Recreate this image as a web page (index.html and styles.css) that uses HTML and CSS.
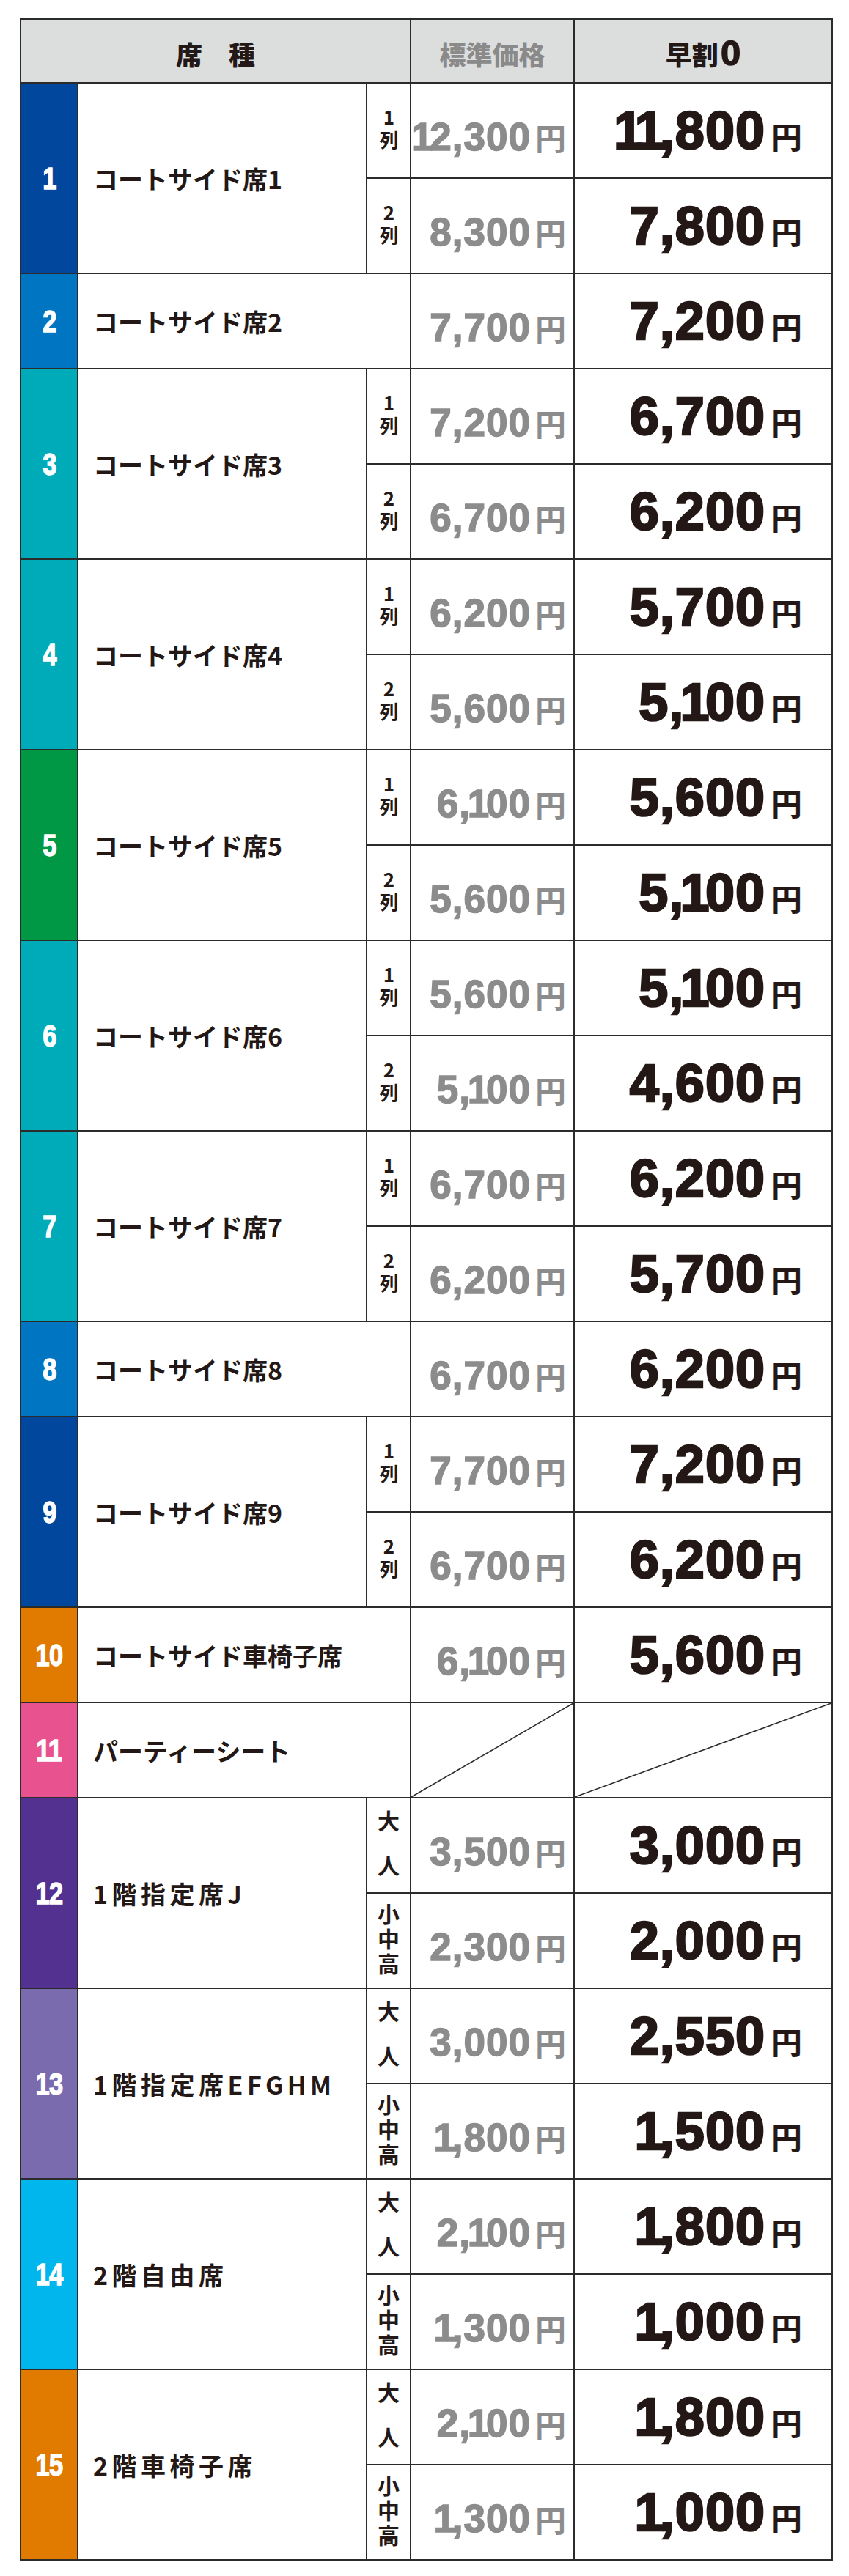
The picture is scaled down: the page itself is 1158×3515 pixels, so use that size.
FILE: index.html
```html
<!DOCTYPE html>
<html lang="ja">
<head>
<meta charset="utf-8">
<title>席種・料金表</title>
<link rel="stylesheet" href="styles.css">
</head>
<body>
<table class="price-table">
  <colgroup>
    <col class="col-num"><col class="col-name"><col class="col-sub"><col class="col-std"><col class="col-early">
  </colgroup>
  <thead>
    <tr>
      <th colspan="3" class="h-seat">席　種</th>
      <th class="h-std">標準価格</th>
      <th class="h-early">早割<span class="h-zero">0</span></th>
    </tr>
  </thead>
  <tbody>
    <tr>
      <td rowspan="2" class="num c1"><span class="no">1</span></td>
      <td rowspan="2" class="name">コートサイド席1</td>
      <td class="sub"><span class="retsu">1列</span></td>
      <td class="std"><span class="n"><span class="one">1</span>2,300</span><span class="yen">円</span></td>
      <td class="early"><span class="n"><span class="one">1</span><span class="one">1</span>,800</span><span class="yen">円</span></td>
    </tr>
    <tr>
      <td class="sub"><span class="retsu">2列</span></td>
      <td class="std"><span class="n">8,300</span><span class="yen">円</span></td>
      <td class="early"><span class="n">7,800</span><span class="yen">円</span></td>
    </tr>

    <tr>
      <td class="num c2"><span class="no">2</span></td>
      <td colspan="2" class="name">コートサイド席2</td>
      <td class="std"><span class="n">7,700</span><span class="yen">円</span></td>
      <td class="early"><span class="n">7,200</span><span class="yen">円</span></td>
    </tr>

    <tr>
      <td rowspan="2" class="num c3"><span class="no">3</span></td>
      <td rowspan="2" class="name">コートサイド席3</td>
      <td class="sub"><span class="retsu">1列</span></td>
      <td class="std"><span class="n">7,200</span><span class="yen">円</span></td>
      <td class="early"><span class="n">6,700</span><span class="yen">円</span></td>
    </tr>
    <tr>
      <td class="sub"><span class="retsu">2列</span></td>
      <td class="std"><span class="n">6,700</span><span class="yen">円</span></td>
      <td class="early"><span class="n">6,200</span><span class="yen">円</span></td>
    </tr>

    <tr>
      <td rowspan="2" class="num c4"><span class="no">4</span></td>
      <td rowspan="2" class="name">コートサイド席4</td>
      <td class="sub"><span class="retsu">1列</span></td>
      <td class="std"><span class="n">6,200</span><span class="yen">円</span></td>
      <td class="early"><span class="n">5,700</span><span class="yen">円</span></td>
    </tr>
    <tr>
      <td class="sub"><span class="retsu">2列</span></td>
      <td class="std"><span class="n">5,600</span><span class="yen">円</span></td>
      <td class="early"><span class="n">5,<span class="one">1</span>00</span><span class="yen">円</span></td>
    </tr>

    <tr>
      <td rowspan="2" class="num c5"><span class="no">5</span></td>
      <td rowspan="2" class="name">コートサイド席5</td>
      <td class="sub"><span class="retsu">1列</span></td>
      <td class="std"><span class="n">6,<span class="one">1</span>00</span><span class="yen">円</span></td>
      <td class="early"><span class="n">5,600</span><span class="yen">円</span></td>
    </tr>
    <tr>
      <td class="sub"><span class="retsu">2列</span></td>
      <td class="std"><span class="n">5,600</span><span class="yen">円</span></td>
      <td class="early"><span class="n">5,<span class="one">1</span>00</span><span class="yen">円</span></td>
    </tr>

    <tr>
      <td rowspan="2" class="num c6"><span class="no">6</span></td>
      <td rowspan="2" class="name">コートサイド席6</td>
      <td class="sub"><span class="retsu">1列</span></td>
      <td class="std"><span class="n">5,600</span><span class="yen">円</span></td>
      <td class="early"><span class="n">5,<span class="one">1</span>00</span><span class="yen">円</span></td>
    </tr>
    <tr>
      <td class="sub"><span class="retsu">2列</span></td>
      <td class="std"><span class="n">5,<span class="one">1</span>00</span><span class="yen">円</span></td>
      <td class="early"><span class="n">4,600</span><span class="yen">円</span></td>
    </tr>

    <tr>
      <td rowspan="2" class="num c7"><span class="no">7</span></td>
      <td rowspan="2" class="name">コートサイド席7</td>
      <td class="sub"><span class="retsu">1列</span></td>
      <td class="std"><span class="n">6,700</span><span class="yen">円</span></td>
      <td class="early"><span class="n">6,200</span><span class="yen">円</span></td>
    </tr>
    <tr>
      <td class="sub"><span class="retsu">2列</span></td>
      <td class="std"><span class="n">6,200</span><span class="yen">円</span></td>
      <td class="early"><span class="n">5,700</span><span class="yen">円</span></td>
    </tr>

    <tr>
      <td class="num c8"><span class="no">8</span></td>
      <td colspan="2" class="name">コートサイド席8</td>
      <td class="std"><span class="n">6,700</span><span class="yen">円</span></td>
      <td class="early"><span class="n">6,200</span><span class="yen">円</span></td>
    </tr>

    <tr>
      <td rowspan="2" class="num c9"><span class="no">9</span></td>
      <td rowspan="2" class="name">コートサイド席9</td>
      <td class="sub"><span class="retsu">1列</span></td>
      <td class="std"><span class="n">7,700</span><span class="yen">円</span></td>
      <td class="early"><span class="n">7,200</span><span class="yen">円</span></td>
    </tr>
    <tr>
      <td class="sub"><span class="retsu">2列</span></td>
      <td class="std"><span class="n">6,700</span><span class="yen">円</span></td>
      <td class="early"><span class="n">6,200</span><span class="yen">円</span></td>
    </tr>

    <tr>
      <td class="num c10"><span class="no">10</span></td>
      <td colspan="2" class="name">コートサイド車椅子席</td>
      <td class="std"><span class="n">6,<span class="one">1</span>00</span><span class="yen">円</span></td>
      <td class="early"><span class="n">5,600</span><span class="yen">円</span></td>
    </tr>

    <tr>
      <td class="num c11"><span class="no">11</span></td>
      <td colspan="2" class="name">パーティーシート</td>
      <td class="slash"><svg class="slash-line" viewBox="0 0 100 100" preserveAspectRatio="none" aria-hidden="true"><line x1="0" y1="100" x2="100" y2="0"/></svg></td>
      <td class="slash"><svg class="slash-line" viewBox="0 0 100 100" preserveAspectRatio="none" aria-hidden="true"><line x1="0" y1="100" x2="100" y2="0"/></svg></td>
    </tr>

    <tr>
      <td rowspan="2" class="num c12"><span class="no">12</span></td>
      <td rowspan="2" class="name name-sp">1階指定席J</td>
      <td class="sub"><span class="adult">大人</span></td>
      <td class="std"><span class="n">3,500</span><span class="yen">円</span></td>
      <td class="early"><span class="n">3,000</span><span class="yen">円</span></td>
    </tr>
    <tr>
      <td class="sub"><span class="child">小中高</span></td>
      <td class="std"><span class="n">2,300</span><span class="yen">円</span></td>
      <td class="early"><span class="n">2,000</span><span class="yen">円</span></td>
    </tr>

    <tr>
      <td rowspan="2" class="num c13"><span class="no">13</span></td>
      <td rowspan="2" class="name name-sp">1階指定席EFGHM</td>
      <td class="sub"><span class="adult">大人</span></td>
      <td class="std"><span class="n">3,000</span><span class="yen">円</span></td>
      <td class="early"><span class="n">2,550</span><span class="yen">円</span></td>
    </tr>
    <tr>
      <td class="sub"><span class="child">小中高</span></td>
      <td class="std"><span class="n"><span class="one">1</span>,800</span><span class="yen">円</span></td>
      <td class="early"><span class="n"><span class="one">1</span>,500</span><span class="yen">円</span></td>
    </tr>

    <tr>
      <td rowspan="2" class="num c14"><span class="no">14</span></td>
      <td rowspan="2" class="name name-sp">2階自由席</td>
      <td class="sub"><span class="adult">大人</span></td>
      <td class="std"><span class="n">2,<span class="one">1</span>00</span><span class="yen">円</span></td>
      <td class="early"><span class="n"><span class="one">1</span>,800</span><span class="yen">円</span></td>
    </tr>
    <tr>
      <td class="sub"><span class="child">小中高</span></td>
      <td class="std"><span class="n"><span class="one">1</span>,300</span><span class="yen">円</span></td>
      <td class="early"><span class="n"><span class="one">1</span>,000</span><span class="yen">円</span></td>
    </tr>

    <tr>
      <td rowspan="2" class="num c15"><span class="no">15</span></td>
      <td rowspan="2" class="name name-sp">2階車椅子席</td>
      <td class="sub"><span class="adult">大人</span></td>
      <td class="std"><span class="n">2,<span class="one">1</span>00</span><span class="yen">円</span></td>
      <td class="early"><span class="n"><span class="one">1</span>,800</span><span class="yen">円</span></td>
    </tr>
    <tr>
      <td class="sub"><span class="child">小中高</span></td>
      <td class="std"><span class="n"><span class="one">1</span>,300</span><span class="yen">円</span></td>
      <td class="early"><span class="n"><span class="one">1</span>,000</span><span class="yen">円</span></td>
    </tr>
  </tbody>
</table>
</body>
</html>
```

FILE: styles.css
```css
html, body {
  margin: 0;
  padding: 0;
  background: #ffffff;
}

.price-table {
  border-collapse: collapse;
  table-layout: fixed;
  width: 1107px;
  margin: 25px 0 0 27px;
  font-family: "Noto Sans CJK JP", "Noto Sans", sans-serif;
  color: #231815;
}

.col-num { width: 78px; }
.col-name { width: 394px; }
.col-sub { width: 60px; }
.col-std { width: 223px; }
.col-early { width: 352px; }

.price-table th,
.price-table td {
  border: 2px solid #2b2b2b;
  padding: 0;
  vertical-align: middle;
}

.price-table thead tr { height: 87px; }
.price-table tbody tr { height: 130px; }

/* header */
.price-table th {
  background: #dcdddd;
  font-size: 36px;
  font-weight: 900;
  line-height: 40px;
  text-align: center;
  padding-top: 6px;
}
.price-table .h-std { color: #8a8a8a; }
.price-table .h-early { color: #231815; }
.h-zero {
  font-family: "Liberation Sans", sans-serif;
  font-size: 49px;
  font-weight: 700;
  margin-left: 3px;
  -webkit-text-stroke: 1.5px #231815;
}

/* number column */
.price-table .num {
  color: #ffffff;
  text-align: center;
  font-family: "Liberation Sans", sans-serif;
  font-size: 43px;
  font-weight: 700;
}
.no {
  display: inline-block;
  transform: scaleX(0.8);
  -webkit-text-stroke: 1.5px #ffffff;
  letter-spacing: -1px;
}
.c1, .c9 { background: #00479d; }
.c2, .c8 { background: #0075c2; }
.c3, .c4, .c6, .c7 { background: #00abb9; }
.c5 { background: #009844; }
.c10, .c15 { background: #e07b00; }
.c11 { background: #e8528e; }
.c12 { background: #533190; }
.c13 { background: #7a6bae; }
.c14 { background: #00b6ed; }

/* seat name */
.price-table .name {
  padding-left: 20px;
  font-size: 34px;
  font-weight: 700;
  white-space: nowrap;
}
.price-table .name-sp { letter-spacing: 5.5px; }

/* sub label (vertical text) */
.price-table .sub {
  text-align: center;
  font-weight: 700;
}
.retsu,
.adult,
.child {
  display: inline-block;
  writing-mode: vertical-rl;
  text-orientation: upright;
  line-height: 1;
}
.retsu {
  font-size: 26px;
  letter-spacing: 5px;
  margin-bottom: -5px;
}
.adult {
  font-size: 30px;
  letter-spacing: 31px;
  margin-bottom: -31px;
}
.child {
  font-size: 30px;
  letter-spacing: 4px;
  margin-bottom: -4px;
}

/* prices */
.price-table .std,
.price-table .early {
  text-align: right;
  white-space: nowrap;
  font-size: 0;
  line-height: 1;
}
.price-table .std {
  color: #8c8c8c;
  padding: 16px 10px 0 0;
}
.price-table .early {
  color: #231815;
  padding-right: 40px;
}
.n {
  font-family: "Liberation Sans", sans-serif;
  font-weight: 700;
  line-height: 1;
  letter-spacing: 1px;
}
.one {
  margin-left: -0.08em;
  letter-spacing: -0.08em;
}
.std .n {
  font-size: 53px;
  -webkit-text-stroke: 1.5px #8c8c8c;
}
.early .n {
  font-size: 72px;
  -webkit-text-stroke: 2.5px #231815;
}
.yen {
  font-family: "Noto Sans CJK JP", sans-serif;
  font-size: 42px;
  font-weight: 700;
  line-height: 1;
}
.std .yen { margin-left: 6px; }
.early .yen { margin-left: 8px; }

/* not-for-sale cells */
.price-table .slash { height: 128px; }
.slash-line {
  display: block;
  width: 100%;
  height: 128px;
}
.slash-line line {
  stroke: #2b2b2b;
  stroke-width: 1.6;
  vector-effect: non-scaling-stroke;
}
```
